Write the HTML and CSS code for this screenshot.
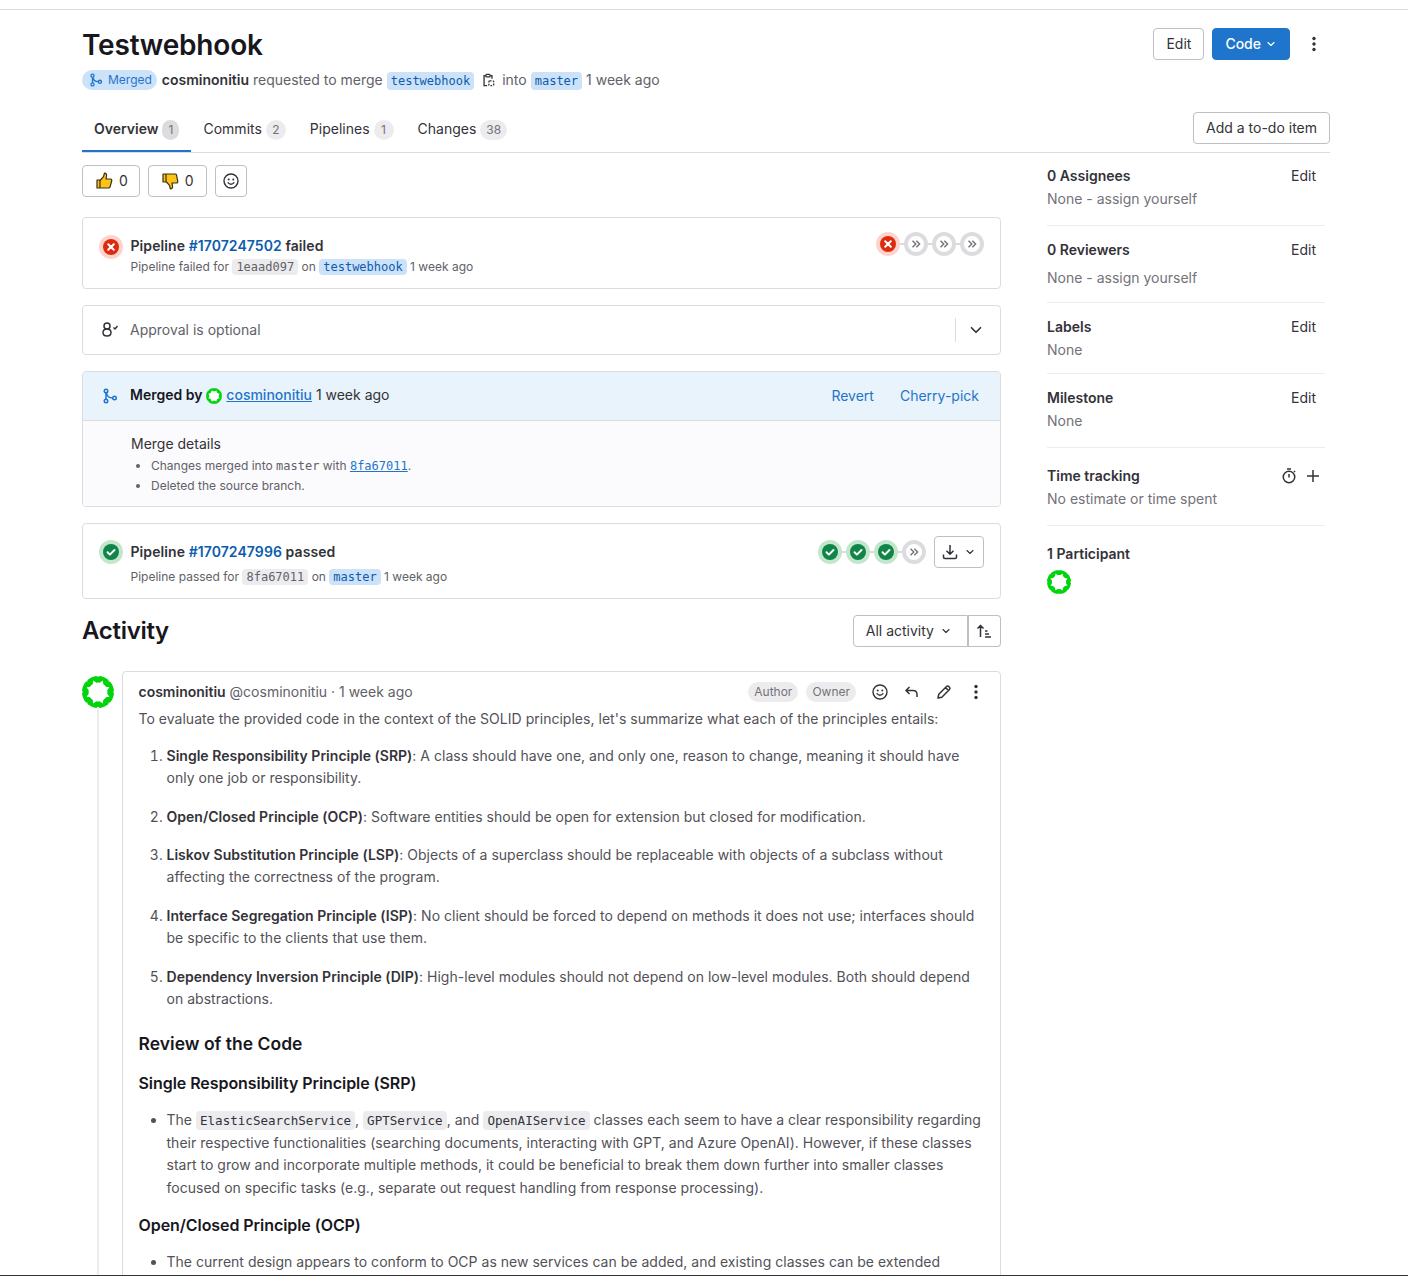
FILE: index.html
```html
<!DOCTYPE html>
<html lang="en">
<head>
  <meta charset="UTF-8">
  <title>Testwebhook</title>
  <link rel="stylesheet" href="styles.css">
</head>
<body>
  <svg class="defs" width="0" height="0" aria-hidden="true">
    <symbol id="i-merge" viewBox="0 0 16 16">
      <circle cx="4" cy="3" r="1.75" fill="none" stroke="currentColor" stroke-width="1.5"/>
      <circle cx="4" cy="13" r="1.75" fill="none" stroke="currentColor" stroke-width="1.5"/>
      <circle cx="12.5" cy="10" r="1.75" fill="none" stroke="currentColor" stroke-width="1.5"/>
      <path d="M4 5v6M4.5 5c.5 3 2.500 5 6.200 5" fill="none" stroke="currentColor" stroke-width="1.5"/>
    </symbol>
    <symbol id="i-chev" viewBox="0 0 16 16">
      <path d="M4 6l4 4 4-4" fill="none" stroke="currentColor" stroke-width="1.5" stroke-linecap="round" stroke-linejoin="round"/>
    </symbol>
    <symbol id="i-dots" viewBox="0 0 16 16">
      <circle cx="8" cy="2.500" r="1.700" fill="currentColor"/>
      <circle cx="8" cy="8" r="1.700" fill="currentColor"/>
      <circle cx="8" cy="13.500" r="1.700" fill="currentColor"/>
    </symbol>
    <symbol id="i-smile" viewBox="0 0 16 16">
      <circle cx="8" cy="8" r="7" fill="none" stroke="currentColor" stroke-width="1.4"/>
      <circle cx="5.700" cy="6.500" r="1" fill="currentColor"/>
      <circle cx="10.300" cy="6.500" r="1" fill="currentColor"/>
      <path d="M5 9.700c1.500 2 4.500 2 6 0" fill="none" stroke="currentColor" stroke-width="1.400" stroke-linecap="round"/>
    </symbol>
    <symbol id="i-fail" viewBox="0 0 24 24">
      <circle cx="12" cy="12" r="12" fill="#fdd4cd"/>
      <circle cx="12" cy="12" r="8" fill="#dd2b0e"/>
      <path d="M9.200 9.200l5.600 5.600M14.800 9.200l-5.600 5.600" stroke="#fff" stroke-width="2" stroke-linecap="round"/>
    </symbol>
    <symbol id="i-pass" viewBox="0 0 24 24">
      <circle cx="12" cy="12" r="12" fill="#c3e6cd"/>
      <circle cx="12" cy="12" r="8" fill="#108548"/>
      <path d="M8.500 12.300l2.400 2.300 4.600-4.600" fill="none" stroke="#fff" stroke-width="2" stroke-linecap="round" stroke-linejoin="round"/>
    </symbol>
    <symbol id="i-skip" viewBox="0 0 24 24">
      <circle cx="12" cy="12" r="10" fill="#fff" stroke="#dcdcde" stroke-width="4"/>
      <path d="M8.500 8.700l3.300 3.300-3.300 3.300M12.300 8.700l3.300 3.300-3.300 3.300" fill="none" stroke="#737278" stroke-width="1.400"/>
    </symbol>
    <symbol id="i-avatar" viewBox="0 0 32 32">
      <circle cx="16" cy="16" r="12.750" fill="#fff" stroke="#00d40a" stroke-width="6.500"/>
      <g fill="#fff">
        <path d="M16 3.600l3 5h-6z" transform="rotate(22.500 16 16)"/>
        <path d="M16 3.600l3 5h-6z" transform="rotate(67.500 16 16)"/>
        <path d="M16 3.600l3 5h-6z" transform="rotate(112.500 16 16)"/>
        <path d="M16 3.600l3 5h-6z" transform="rotate(157.500 16 16)"/>
        <path d="M16 3.600l3 5h-6z" transform="rotate(202.500 16 16)"/>
        <path d="M16 3.600l3 5h-6z" transform="rotate(247.500 16 16)"/>
        <path d="M16 3.600l3 5h-6z" transform="rotate(292.500 16 16)"/>
        <path d="M16 3.600l3 5h-6z" transform="rotate(337.500 16 16)"/>
        <path d="M16 1.300l1-1.500h-2z"/>
        <path d="M16 1.300l1-1.500h-2z" transform="rotate(45 16 16)"/>
        <path d="M16 1.300l1-1.500h-2z" transform="rotate(90 16 16)"/>
        <path d="M16 1.300l1-1.500h-2z" transform="rotate(135 16 16)"/>
        <path d="M16 1.300l1-1.500h-2z" transform="rotate(180 16 16)"/>
        <path d="M16 1.300l1-1.500h-2z" transform="rotate(225 16 16)"/>
        <path d="M16 1.300l1-1.500h-2z" transform="rotate(270 16 16)"/>
        <path d="M16 1.300l1-1.500h-2z" transform="rotate(315 16 16)"/>
      </g>
    </symbol>
  </svg>

  <div class="top-line"></div>

  <div class="page">
    <header class="mr-head">
      <div class="title-row">
        <h1 class="mr-title">Testwebhook</h1>
        <div class="title-actions">
          <button class="btn">Edit</button>
          <button class="btn btn-primary">Code <svg class="ico-12"><use href="#i-chev"/></svg></button>
          <svg class="ico-16 kebab"><use href="#i-dots"/></svg>
        </div>
      </div>
      <div class="mr-meta">
        <span class="badge-merged"><svg class="ico-14"><use href="#i-merge"/></svg> Merged</span>
        <strong class="meta-author">cosminonitiu</strong>
        <span>requested to merge</span>
        <code class="ref">testwebhook</code>
        <svg class="copy-ico" viewBox="0 0 16 16">
          <path d="M5 3H3.500v11.500H7M11 3h1.500v3.500" fill="none" stroke="#333238" stroke-width="1.500"/>
          <rect x="5.500" y="1.500" width="5" height="3" rx="1" fill="none" stroke="#333238" stroke-width="1.500"/>
          <rect x="9" y="9" width="5.500" height="5.500" rx="1" fill="none" stroke="#333238" stroke-width="1.500" stroke-dasharray="2 1.500"/>
        </svg>
        <span>into</span>
        <code class="ref">master</code>
        <span>1 week ago</span>
      </div>
      <div class="tab-row">
        <nav class="tabs">
          <a class="tab tab-active">Overview <span class="count count-active">1</span></a>
          <a class="tab">Commits <span class="count">2</span></a>
          <a class="tab">Pipelines <span class="count">1</span></a>
          <a class="tab">Changes <span class="count">38</span></a>
        </nav>
        <button class="btn btn-todo">Add a to-do item</button>
      </div>
    </header>

    <div class="layout">
      <main class="main-col">
        <div class="reactions">
          <button class="btn react">
            <svg class="ico-18" viewBox="0 0 18 18"><path d="M2 8h3v8H2zM5 8.500l3.500-3.800L9.500 1c1.600 0 2.300 1.300 2 3L11 7h4.500c1 0 1.500 1 1.200 2l-1.700 6c-.2.700-.8 1-1.500 1H5z" fill="#fcc419" stroke="#3a2f10" stroke-width="1.200" stroke-linejoin="round"/></svg>
            0
          </button>
          <button class="btn react">
            <svg class="ico-18" viewBox="0 0 18 18"><path d="M2 2h3v8H2zM5 9.500l3.500 3.800.9 3.700c1.600 0 2.400-1.300 2.100-3l-.5-3h4.500c1 0 1.500-1 1.200-2l-1.200-6c-.2-.7-.8-1-1.500-1H5z" fill="#fcc419" stroke="#3a2f10" stroke-width="1.200" stroke-linejoin="round"/></svg>
            0
          </button>
          <button class="btn react-add"><svg class="ico-16"><use href="#i-smile"/></svg></button>
        </div>

        <section class="card pipe-card pipe-fail">
          <svg class="ico-24 pipe-status"><use href="#i-fail"/></svg>
          <div class="pipe-text">
            <div class="pipe-title">Pipeline <a class="dark-link">#1707247502</a> failed</div>
            <div class="pipe-sub">Pipeline failed for <code class="sha">1eaad097</code> on <code class="ref">testwebhook</code> 1 week ago</div>
          </div>
          <div class="stages">
            <svg class="ico-24"><use href="#i-fail"/></svg><i></i>
            <svg class="ico-24"><use href="#i-skip"/></svg><i></i>
            <svg class="ico-24"><use href="#i-skip"/></svg><i></i>
            <svg class="ico-24"><use href="#i-skip"/></svg>
          </div>
        </section>

        <section class="card approval-card">
          <svg class="ico-18 approval-ico" viewBox="0 0 18 18">
            <circle cx="6" cy="5" r="3" fill="none" stroke="#333238" stroke-width="1.500"/>
            <path d="M6 8c-2.500 0-4 1.500-4 3.500S3.500 15 6 15s4-1.500 4-3.500S8.500 8 6 8zM12.500 6.500l1.500 1.500 2.500-3" fill="none" stroke="#333238" stroke-width="1.500"/>
          </svg>
          <span class="approval-text">Approval is optional</span>
          <span class="approval-toggle"><svg class="ico-18"><use href="#i-chev"/></svg></span>
        </section>

        <section class="card merged-card">
          <div class="merged-head">
            <svg class="ico-16 merged-ico"><use href="#i-merge"/></svg>
            <span class="merged-by"><strong>Merged by</strong> <svg class="ico-16 inline-avatar"><use href="#i-avatar"/></svg> <a class="under-link">cosminonitiu</a> 1 week ago</span>
            <a class="merged-action">Revert</a>
            <a class="merged-action">Cherry-pick</a>
          </div>
          <div class="merged-body">
            <div class="merged-label">Merge details</div>
            <ul class="merged-list">
              <li>Changes merged into <code class="plain-code">master</code> with <a class="under-link"><code>8fa67011</code></a>.</li>
              <li>Deleted the source branch.</li>
            </ul>
          </div>
        </section>

        <section class="card pipe-card pipe-pass">
          <svg class="ico-24 pipe-status"><use href="#i-pass"/></svg>
          <div class="pipe-text">
            <div class="pipe-title">Pipeline <a class="dark-link">#1707247996</a> passed</div>
            <div class="pipe-sub">Pipeline passed for <code class="sha">8fa67011</code> on <code class="ref">master</code> 1 week ago</div>
          </div>
          <div class="stages">
            <svg class="ico-24"><use href="#i-pass"/></svg><i></i>
            <svg class="ico-24"><use href="#i-pass"/></svg><i></i>
            <svg class="ico-24"><use href="#i-pass"/></svg><i></i>
            <svg class="ico-24"><use href="#i-skip"/></svg>
          </div>
          <button class="btn download">
            <svg class="ico-16" viewBox="0 0 16 16"><path d="M8 1v9M4.500 6.800L8 10.300l3.500-3.500M1.500 10.500v2.500c0 .8.700 1.500 1.500 1.500h10c.8 0 1.500-.7 1.500-1.500v-2.500" fill="none" stroke="#333238" stroke-width="1.500"/></svg>
            <svg class="ico-12"><use href="#i-chev"/></svg>
          </button>
        </section>

        <div class="activity-head">
          <h2 class="activity-title">Activity</h2>
          <div class="btn-group">
            <button class="btn group-left">All activity <svg class="ico-12"><use href="#i-chev"/></svg></button>
            <button class="btn group-right">
              <svg class="ico-16" viewBox="0 0 16 16"><path d="M4.500 14V3M1.500 5.500l3-3 3 3M9 8h2.500M9 11h4M9 14h6" fill="none" stroke="#333238" stroke-width="1.500"/></svg>
            </button>
          </div>
        </div>

        <div class="timeline">
          <svg class="note-avatar"><use href="#i-avatar"/></svg>
          <article class="note">
            <div class="note-head">
              <span class="note-author"><strong>cosminonitiu</strong> @cosminonitiu · 1 week ago</span>
              <span class="role">Author</span>
              <span class="role">Owner</span>
              <span class="note-tools">
                <svg class="ico-16"><use href="#i-smile"/></svg>
                <svg class="ico-16" viewBox="0 0 16 16"><path d="M5.500 3L2 6.500 5.500 10M2.500 6.500H9c2.500 0 4 1.500 4 4V13" fill="none" stroke="#333238" stroke-width="1.500"/></svg>
                <svg class="ico-16" viewBox="0 0 16 16"><path d="M2 14l.8-3.800 7.700-7.700c.7-.7 1.700-.7 2.300 0l.7.700c.6.600.6 1.600 0 2.300l-7.700 7.700zM9.500 3.500l3 3" fill="none" stroke="#333238" stroke-width="1.500" stroke-linejoin="round"/></svg>
                <svg class="ico-16"><use href="#i-dots"/></svg>
              </span>
            </div>
            <div class="md">
              <p>To evaluate the provided code in the context of the SOLID principles, let's summarize what each of the principles entails:</p>
              <ol>
                <li><strong>Single Responsibility Principle (SRP)</strong>: A class should have one, and only one, reason to change, meaning it should have only one job or responsibility.</li>
                <li><strong>Open/Closed Principle (OCP)</strong>: Software entities should be open for extension but closed for modification.</li>
                <li><strong>Liskov Substitution Principle (LSP)</strong>: Objects of a superclass should be replaceable with objects of a subclass without affecting the correctness of the program.</li>
                <li><strong>Interface Segregation Principle (ISP)</strong>: No client should be forced to depend on methods it does not use; interfaces should be specific to the clients that use them.</li>
                <li><strong>Dependency Inversion Principle (DIP)</strong>: High-level modules should not depend on low-level modules. Both should depend on abstractions.</li>
              </ol>
              <h3>Review of the Code</h3>
              <h4>Single Responsibility Principle (SRP)</h4>
              <ul>
                <li>The <code>ElasticSearchService</code>, <code>GPTService</code>, and <code>OpenAIService</code> classes each seem to have a clear responsibility regarding their respective functionalities (searching documents, interacting with GPT, and Azure OpenAI). However, if these classes start to grow and incorporate multiple methods, it could be beneficial to break them down further into smaller classes focused on specific tasks (e.g., separate out request handling from response processing).</li>
              </ul>
              <h4 class="h4-tight">Open/Closed Principle (OCP)</h4>
              <ul>
                <li>The current design appears to conform to OCP as new services can be added, and existing classes can be extended</li>
              </ul>
            </div>
          </article>
        </div>
      </main>

      <aside class="sidebar">
        <div class="side-block side-assignees">
          <div class="side-row"><strong>0 Assignees</strong><a>Edit</a></div>
          <div class="side-value">None - assign yourself</div>
        </div>
        <div class="side-block side-reviewers">
          <div class="side-row"><strong>0 Reviewers</strong><a>Edit</a></div>
          <div class="side-value">None - assign yourself</div>
        </div>
        <div class="side-block side-labels">
          <div class="side-row"><strong>Labels</strong><a>Edit</a></div>
          <div class="side-value">None</div>
        </div>
        <div class="side-block side-milestone">
          <div class="side-row"><strong>Milestone</strong><a>Edit</a></div>
          <div class="side-value">None</div>
        </div>
        <div class="side-block side-time">
          <div class="side-row">
            <strong>Time tracking</strong>
            <span class="time-tools">
              <svg class="ico-16" viewBox="0 0 16 16"><circle cx="8" cy="9" r="5.750" fill="none" stroke="#333238" stroke-width="1.500"/><path d="M8 6v3.500M6 1h4M13 3l1 1" fill="none" stroke="#333238" stroke-width="1.500"/></svg>
              <svg class="ico-16" viewBox="0 0 16 16"><path d="M8 2v12M2 8h12" fill="none" stroke="#333238" stroke-width="1.500"/></svg>
            </span>
          </div>
          <div class="side-value">No estimate or time spent</div>
        </div>
        <div class="side-block side-people">
          <div class="side-row"><strong>1 Participant</strong></div>
          <svg class="side-avatar"><use href="#i-avatar"/></svg>
        </div>
      </aside>
    </div>
  </div>

  <div class="bottom-line"></div>
</body>
</html>
```

FILE: styles.css
```css
* {
  box-sizing: border-box;
}

body {
  margin: 0;
  height: 1276px;
  display: flex;
  flex-direction: column;
  overflow: hidden;
  background: #fff;
  color: #333238;
  font-family: Inter, "Noto Sans", sans-serif;
  font-size: 14px;
  line-height: 20px;
}

code {
  font-family: "DejaVu Sans Mono", "Liberation Mono", monospace;
  font-size: 12px;
}

svg {
  flex: none;
}

.defs {
  position: absolute;
}

.ico-12 { width: 12px; height: 12px; }
.ico-14 { width: 14px; height: 14px; }
.ico-16 { width: 16px; height: 16px; }
.ico-18 { width: 18px; height: 18px; }
.ico-24 { width: 24px; height: 24px; }

.top-line {
  flex: none;
  height: 10px;
  border-bottom: 1px solid #dcdcde;
}

.bottom-line {
  flex: none;
  height: 1px;
  background: #333238;
}

.page {
  flex: 1;
  min-height: 0;
  overflow: hidden;
  width: 1248px;
  margin-left: 82px;
}

.btn {
  display: inline-flex;
  align-items: center;
  gap: 4px;
  height: 32px;
  padding: 0 12px;
  background: #fff;
  color: #333238;
  border: 1px solid #bfbfc3;
  border-radius: 4px;
  font: inherit;
}

.btn-primary {
  background: #1f75cb;
  border-color: #1f75cb;
  color: #fff;
  font-weight: 500;
}

/* header */
.title-row {
  display: flex;
  align-items: center;
  justify-content: space-between;
  height: 36px;
  margin-top: 16px;
}

.mr-title {
  margin: 2px 0 0;
  font-size: 28px;
  line-height: 36px;
  font-weight: 600;
  color: #18171d;
  letter-spacing: -0.2px;
}

.title-actions {
  display: flex;
  align-items: center;
  gap: 8px;
  margin-right: 8px;
}

.kebab {
  margin-left: 8px;
  color: #333238;
}

.mr-meta {
  display: flex;
  align-items: center;
  gap: 4px;
  margin-top: 8px;
  height: 20px;
  color: #626168;
}

.mr-meta .ref {
  margin-top: 2px;
}

.badge-merged {
  display: inline-flex;
  align-items: center;
  gap: 5px;
  height: 20px;
  margin-right: 1px;
  padding: 0 5px 0 7px;
  background: #cbe2f9;
  color: #1f75cb;
  border-radius: 10px;
  font-size: 12px;
}

.meta-author {
  font-weight: 600;
  color: #333238;
}

.ref {
  padding: 1px 4px;
  border-radius: 4px;
  background: #cbe2f9;
  color: #0b5cad;
  line-height: 16px;
}

.sha {
  padding: 1px 4px;
  border-radius: 4px;
  background: #ececef;
  color: #626168;
  line-height: 16px;
}

.copy-ico {
  width: 14px;
  height: 16px;
  margin: 0 3px;
}

.tab-row {
  display: flex;
  align-items: flex-end;
  justify-content: space-between;
  height: 61px;
  margin-top: 2px;
  border-bottom: 1px solid #dcdcde;
}

.tabs {
  display: flex;
}

.tab {
  display: flex;
  align-items: center;
  gap: 4px;
  height: 46px;
  padding: 2px 12px 0;
  color: #333238;
  border-bottom: 2px solid transparent;
}

.tab-active {
  font-weight: 600;
  border-bottom-color: #1f75cb;
}

.count {
  min-width: 20px;
  height: 20px;
  margin-top: 2px;
  padding: 0 6px;
  border-radius: 10px;
  background: #ececef;
  color: #737278;
  font-size: 12px;
  font-weight: 400;
  text-align: center;
}

.count-active {
  min-width: 17px;
  padding: 0 4px;
  background: #dcdcde;
}

.btn-todo {
  margin-bottom: 8px;
}

/* two columns */
.layout {
  display: grid;
  grid-template-columns: 919px 1fr;
}

.reactions {
  display: flex;
  gap: 8px;
  margin-top: 12px;
}

.react {
  gap: 6px;
  padding: 0 11px 0 12px;
}

.react + .react {
  padding-right: 12px;
}

.react-add {
  height: 32px;
  width: 32px;
  padding: 0;
  display: flex;
  align-items: center;
  justify-content: center;
  background: #fff;
  border: 1px solid #bfbfc3;
  border-radius: 4px;
  color: #333238;
}

.card {
  border: 1px solid #dcdcde;
  border-radius: 4px;
  background: #fff;
}

.pipe-card {
  display: flex;
  padding: 0 16px;
}

.pipe-fail {
  margin-top: 20px;
  height: 72px;
  padding-top: 16px;
}

.pipe-pass {
  margin-top: 16px;
  height: 76px;
  padding-top: 15px;
}

.pipe-status {
  margin-top: 1px;
}

.pipe-text {
  flex: 1;
  margin-left: 7.5px;
  padding-top: 2px;
}

.pipe-pass .pipe-text {
  padding-top: 3px;
}

.pipe-title {
  font-weight: 600;
  color: #333238;
  letter-spacing: 0.08px;
}

.pipe-sub {
  font-size: 12px;
  line-height: 20px;
  margin-top: 1px;
  color: #626168;
  letter-spacing: 0;
}

.pipe-pass .pipe-sub {
  margin-top: 5px;
}

.dark-link {
  color: #0b5cad;
}

.stages {
  display: flex;
  align-items: center;
  height: 24px;
  margin-top: -2px;
}

.pipe-pass .stages {
  margin-top: 1px;
}

.stages i {
  width: 4px;
  height: 2px;
  background: #dcdcde;
}

.download {
  margin-left: 8px;
  margin-top: -3px;
  gap: 6px;
  padding: 0 7px;
}

.approval-card {
  display: flex;
  align-items: center;
  height: 50px;
  margin-top: 16px;
  padding: 0 15px 0 18px;
}

.approval-ico {
  margin-right: 11px;
}

.approval-text {
  flex: 1;
  color: #626168;
}

.approval-toggle {
  display: flex;
  align-items: center;
  height: 24px;
  padding-left: 11px;
  border-left: 1px solid #dcdcde;
}

.merged-card {
  margin-top: 16px;
  overflow: hidden;
}

.merged-head {
  display: flex;
  align-items: center;
  height: 49px;
  padding: 0 21px 0 19px;
  gap: 26px;
  background: #e9f3fc;
  border-bottom: 1px solid #dcdcde;
}

.merged-ico {
  color: #1f75cb;
  margin-right: -14px;
}

.merged-by {
  flex: 1;
  margin-bottom: 2px;
}

.merged-by strong {
  font-weight: 600;
  color: #18171d;
}

.inline-avatar {
  vertical-align: -4px;
}

.under-link {
  color: #1f75cb;
  text-decoration: underline;
}

.merged-by .under-link {
  font-weight: 500;
}

.merged-action {
  color: #1f75cb;
}

.merged-body {
  height: 85px;
  padding: 13px 0 0 48px;
  background: #fbfafd;
}

.merged-list {
  margin: 2px 0 0;
  padding-left: 20px;
  font-size: 12px;
  color: #626168;
}

.plain-code {
  color: #626168;
}

.activity-head {
  display: flex;
  align-items: center;
  justify-content: space-between;
  margin-top: 16px;
}

.activity-title {
  margin: 0;
  font-size: 24px;
  line-height: 32px;
  font-weight: 600;
  color: #18171d;
  letter-spacing: -0.3px;
}

.btn-group {
  display: flex;
}

.group-left {
  gap: 6px;
  padding-right: 15px;
  border-radius: 4px 0 0 4px;
}

.group-right {
  border-left-width: 0;
  border-radius: 0 4px 4px 0;
  box-shadow: inset 1px 0 #bfbfc3;
  padding: 0 8px;
}

.timeline {
  display: grid;
  grid-template-columns: 40px 1fr;
  position: relative;
  margin-top: 24px;
}

.timeline::before {
  content: "";
  position: absolute;
  left: 15px;
  top: 36px;
  bottom: 0;
  width: 2px;
  background: #ececef;
}

.note-avatar {
  width: 32px;
  height: 32px;
  margin-top: 5px;
}

.note {
  border: 1px solid #dcdcde;
  border-radius: 4px;
  padding: 0 15px 20px 15.5px;
}

.note-head {
  display: flex;
  align-items: center;
  gap: 8px;
  height: 40px;
}

.note-author {
  flex: 1;
  color: #626168;
}

.note-author strong {
  font-weight: 600;
  color: #333238;
}

.role {
  padding: 0 6px;
  height: 20px;
  border-radius: 10px;
  background: #ececef;
  color: #737278;
  font-size: 12px;
}

.note-tools {
  display: flex;
  gap: 16px;
  margin: 0 1px 0 8px;
}

.md {
  color: #535158;
  line-height: 22.4px;
  letter-spacing: 0.02px;
}

.md p {
  margin: -4px 0 14.3px;
}

.md ol,
.md ul {
  margin: 0;
  padding-left: 28px;
}

.md li + li {
  margin-top: 16px;
}

.md li strong {
  font-weight: 600;
  color: #333238;
}

.md h3 {
  margin: 20.3px 0 0;
  font-size: 17.5px;
  line-height: 26px;
  font-weight: 600;
  color: #18171d;
}

.md h4 {
  margin: 14px 0 14px;
  font-size: 16px;
  line-height: 24px;
  font-weight: 600;
  color: #18171d;
  letter-spacing: -0.06px;
}

.md .h4-tight {
  margin-top: 14px;
}

.md code {
  padding: 2px 4px;
  border-radius: 4px;
  background: #ececef;
  color: #333238;
  font-size: 12.55px;
  letter-spacing: 0;
}

/* sidebar */
.sidebar {
  padding: 0 5px 0 46px;
}

.side-block {
  border-bottom: 1px solid #ececef;
}

.side-row {
  display: flex;
  align-items: center;
  justify-content: space-between;
  padding-right: 9px;
  color: #333238;
}

.side-row strong {
  font-weight: 600;
}

.side-value {
  margin-top: 3px;
  color: #737278;
}

.side-assignees { padding: 13px 0 16px; }
.side-reviewers { padding: 14px 0 14px; }
.side-reviewers .side-value { margin-top: 8px; }
.side-labels { padding: 14px 0 13px; }
.side-milestone { padding: 14px 0 16px; }
.side-time { padding: 18px 0 16px; }

.side-people {
  padding-top: 18px;
  border-bottom: 0;
}

.time-tools {
  display: flex;
  gap: 8px;
  margin-right: -5px;
}

.side-avatar {
  display: block;
  width: 24px;
  height: 24px;
  margin-top: 6px;
}
```
